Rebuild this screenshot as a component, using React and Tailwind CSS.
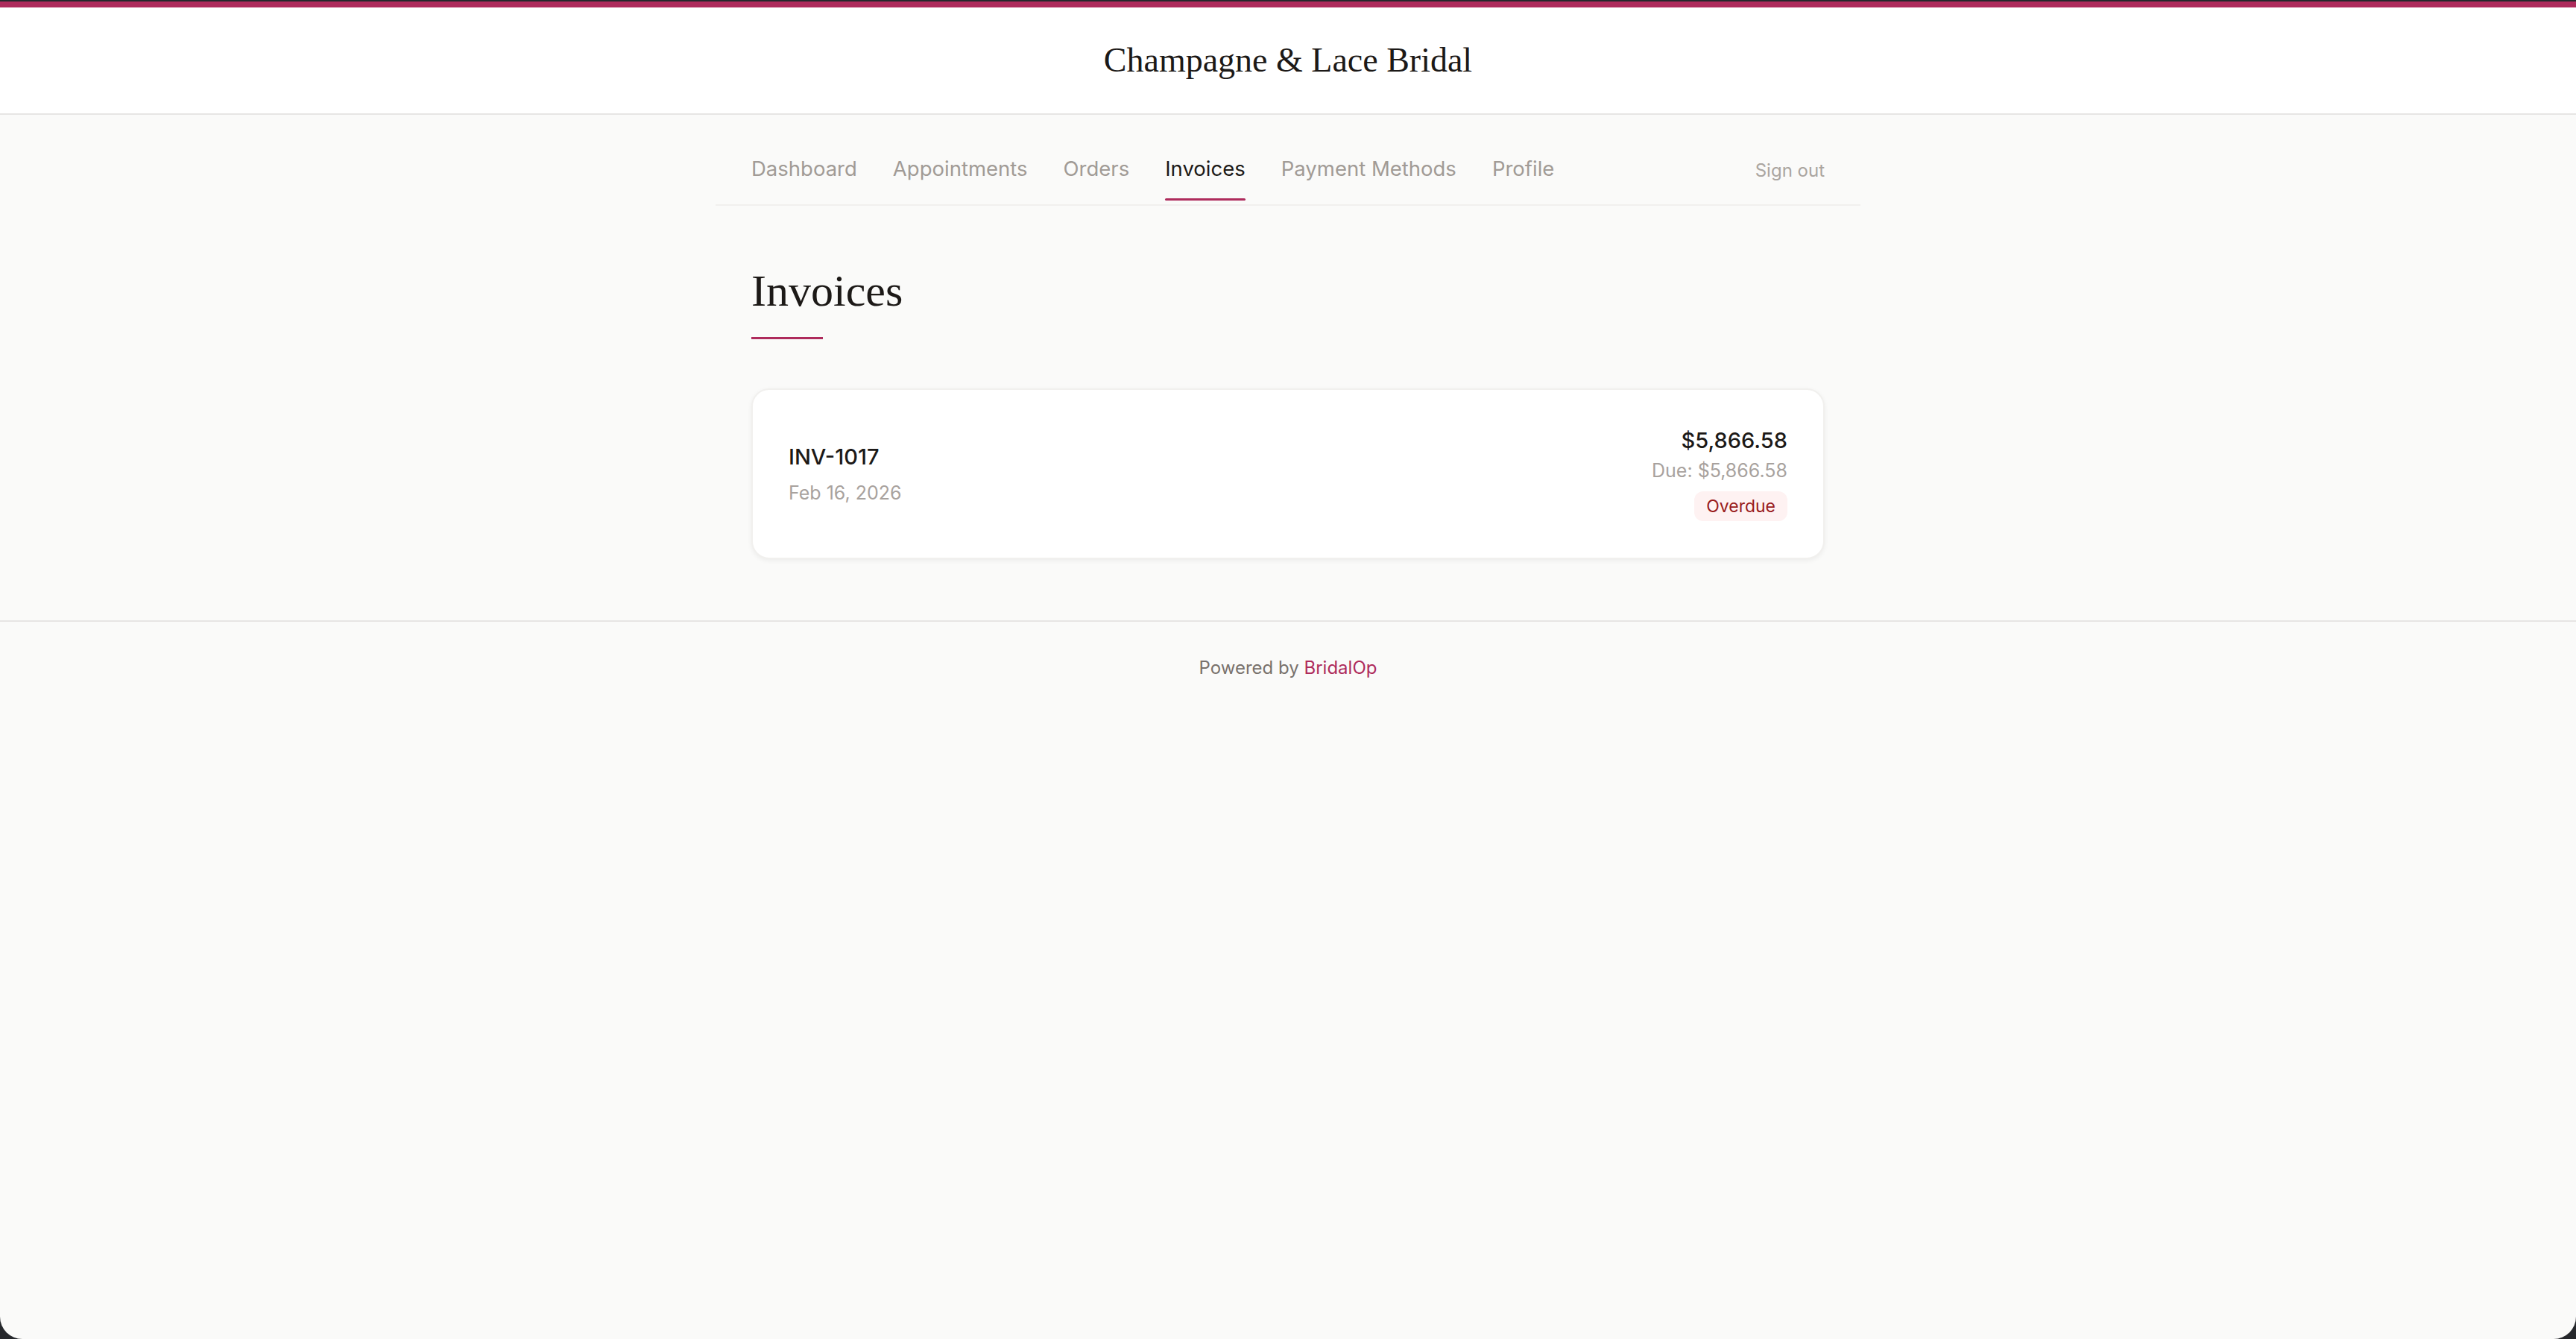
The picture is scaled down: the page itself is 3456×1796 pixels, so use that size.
import React from 'react';

const navLinks = ['Dashboard', 'Appointments', 'Orders', 'Invoices', 'Payment Methods', 'Profile'];

const serif = "font-['Liberation_Serif',serif]";
const sans = "font-['Inter','Noto_Sans',sans-serif]";

const App = () => {
    const active = 'Invoices';

    return (
        <div className="h-screen bg-[#26282c] pt-[2px]">
            <div className={`h-full bg-[#fafaf9] rounded-b-[30px] overflow-hidden flex flex-col ${sans}`}>

                {/* HEADER */}
                <header className="bg-white border-t-8 border-t-[#ae2b5c] border-b-2 border-b-[#e7e5e4]">
                    <div className="h-[142px] flex items-center justify-center">
                        <h1 className={`${serif} text-[46px] leading-none text-[#1c1917]`}>Champagne &amp; Lace Bridal</h1>
                    </div>
                </header>

                {/* NAV */}
                <nav className="w-[1536px] mx-auto px-12 pt-[52px] pb-[5px] border-b-2 border-[#f1f0ee] flex justify-between">
                    <div className="flex gap-12">
                        {navLinks.map((link) => (
                            <a
                                key={link}
                                href="#"
                                className={`relative block text-[27.5px] leading-[40px] pb-[23px] ${link === active ? 'text-[#1c1917]' : 'text-[#a19b96]'}`}
                            >
                                {link}
                                {link === active && (
                                    <span className="absolute left-0 right-0 bottom-0 h-[3px] rounded-full bg-[#ae2b5c]" />
                                )}
                            </a>
                        ))}
                    </div>
                    <button className="self-start mt-[3px] text-[24px] leading-[40px] text-[#aaa5a0]">Sign out</button>
                </nav>

                {/* CONTENT */}
                <main className="w-[1536px] mx-auto px-12 pt-[78px] pb-[82px]">
                    <h2 className={`${serif} text-[60px] leading-[72px] text-[#1c1917]`}>Invoices</h2>
                    <div className="mt-[26px] w-[96px] h-[3px] bg-[#ae2b5c]" />

                    <div className="mt-[66px] bg-white border-2 border-[#f1f0ee] rounded-[24px] shadow-[0_2px_6px_rgba(0,0,0,0.06)] px-12 pt-12 pb-[49px] flex items-center justify-between">
                        <div className="pt-[2px]">
                            <div className="text-[29px] leading-[44px] font-medium text-[#1c1917]">INV-1017</div>
                            <div className="mt-[6px] text-[25px] leading-[40px] text-[#a8a29e]">Feb 16, 2026</div>
                        </div>
                        <div className="text-right">
                            <div className="text-[29px] leading-[40px] font-medium text-[#1c1917]">$5,866.58</div>
                            <div className="text-[25px] leading-[40px] text-[#a8a29e]">Due: $5,866.58</div>
                            <span className="inline-block mt-[8px] px-4 py-[4px] rounded-[12px] bg-[#fef2f2] text-[23px] leading-[32px] text-[#991b1b]">
                                Overdue
                            </span>
                        </div>
                    </div>
                </main>

                {/* FOOTER */}
                <footer className="border-t-2 border-[#e7e5e4] py-[46px] text-center text-[24px] leading-[32px] text-[#78716c]">
                    Powered by <a href="#" className="text-[#ae2b5c]">BridalOp</a>
                </footer>
            </div>
        </div>
    );
};

export default App;
